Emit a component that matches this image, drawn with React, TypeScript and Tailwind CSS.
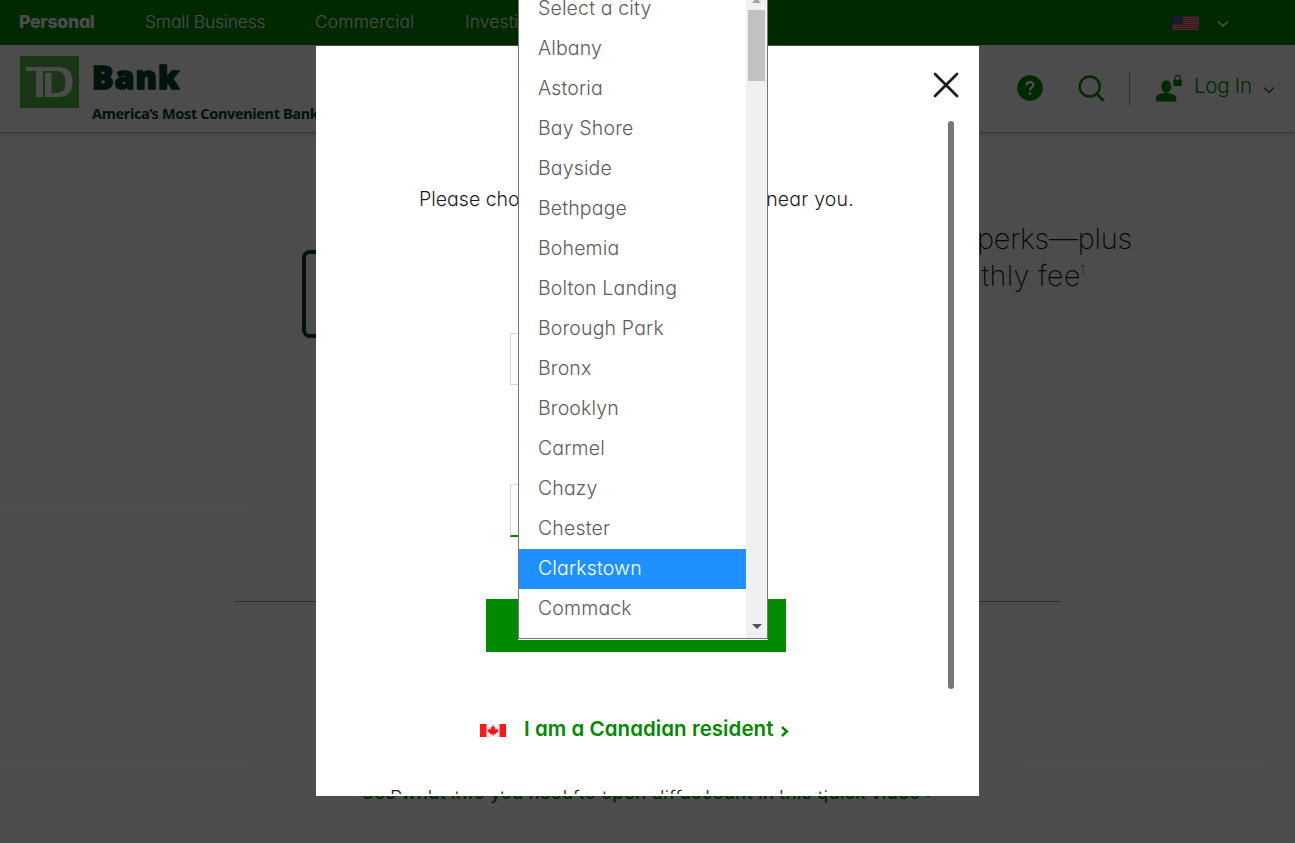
import React from "react";

const cities = [
  "Select a city", "Albany", "Astoria", "Bay Shore", "Bayside", "Bethpage", "Bohemia",
  "Bolton Landing", "Borough Park", "Bronx", "Brooklyn", "Carmel", "Chazy", "Chester",
  "Clarkstown", "Commack",
];

function TopBar() {
  return (
    <div className="flex h-[45px] items-center bg-[#008a00] text-[17.5px] font-light tracking-[-0.2px] text-white">
      <span className="ml-[19px] w-[126px] font-extrabold">Personal</span>
      <span className="w-[170px]">Small Business</span>
      <span className="w-[150px] tracking-[0.1px]">Commercial</span>
      <span className="flex-1 tracking-[0.1px]">Investing</span>
      <svg className="mr-[18px] h-[14px] w-[27px]" viewBox="0 0 27 14">
        <rect width="27" height="14" fill="#e5929a" />
        {[0, 2, 4, 6, 8, 10, 12].map((y) => (
          <rect key={y} y={y} width="27" height="1" fill="#c9505e" />
        ))}
        <rect width="11" height="8" fill="#50508a" />
        <path d="M1 2h9M1 4h9M1 6h9" stroke="#8b8bb6" strokeWidth=".5" strokeDasharray="1 1" />
      </svg>
      <svg className="mt-[3px] mr-[66px] h-[8px] w-[12px]" viewBox="0 0 12 8" fill="none" stroke="white" strokeWidth="1.8">
        <path d="M1 1.3l5 4.8 5-4.8" />
      </svg>
    </div>
  );
}

function Header() {
  return (
    <header className="flex h-[88px] items-start border-b border-[#bbb] bg-white shadow-[0_1px_4px_rgba(0,0,0,0.2)]">
      <svg className="mt-[11px] ml-[20px] h-[52px] w-[59px]" viewBox="0 0 59 52">
        <rect width="59" height="52" fill="#54b948" />
        <path
          fill="white"
          fillRule="evenodd"
          d="M6 11H38C48 11 52.500 16 52.500 26C52.500 37 47 41 38 41H25V17H31.500V37H37C43 37 45.500 33 45.500 26C45.500 19 43 15 37 15H23V41H16V15H6Z"
        />
      </svg>
      <div className="ml-[13px] flex w-[400px] flex-col whitespace-nowrap text-[#00402b]">
        <span className="mt-[13px] h-[38px] font-['Open_Sans'] text-[32px] leading-[38px] font-extrabold tracking-[1px] [-webkit-text-stroke:1.6px_#00402b]">Bank</span>
        <span className="mt-[7px] font-['Noto_Sans'] text-[14.5px] leading-[20px] font-bold tracking-[-0.35px]">America’s Most Convenient Bank®</span>
      </div>
      <div className="mt-[27px] mr-[20px] ml-auto flex h-[33px] items-center text-[#008a00]">
        <svg className="mr-[35px] mb-[2px] h-[26px] w-[26px]" viewBox="0 0 26 26">
          <circle cx="13" cy="13" r="12.800" fill="#008a00" />
          <path d="M9.700 10.200C9.700 6 16.400 6 16.400 10C16.400 12.500 13 12.300 13 15.200" fill="none" stroke="white" strokeWidth="2.400" />
          <circle cx="13" cy="18.500" r="1.500" fill="white" />
        </svg>
        <svg className="mr-[24px] mb-px h-[27px] w-[27px]" viewBox="0 0 27 27" fill="none" stroke="#008a00" strokeWidth="2.300">
          <circle cx="11.700" cy="11.500" r="10" />
          <path d="M18.700 18.700l7 7" strokeWidth="2.800" />
        </svg>
        <div className="h-[33px] w-px bg-[#aaa]" />
        <svg className="ml-[26px] h-[27px] w-[26px]" viewBox="0 0 26 27" fill="#008a00">
          <ellipse cx="10.300" cy="11.500" rx="5" ry="6.200" />
          <path d="M0 26v-2.500C0 19.500 5 18 10 18s10.300 1.500 10.300 5.500V26Q20.300 26.500 19 26.500H1.300Q0 26.500 0 26Z" />
          <rect x="17.500" y="4.700" width="8.200" height="6.300" rx=".6" />
          <path d="M19 5V3a2.600 2.600 0 0 1 5.200 0v2" fill="none" stroke="#008a00" strokeWidth="1.200" />
        </svg>
        <span className="ml-[12px] w-[61px] pb-[5px] text-[20.5px] leading-6 font-light tracking-[-0.25px] whitespace-nowrap">Log In</span>
        <svg className="mt-[3px] ml-[8px] h-[8px] w-[12px]" viewBox="0 0 12 8" fill="none" stroke="#008a00" strokeWidth="1.500">
          <path d="M1 1.500l5 5 5-5" />
        </svg>
      </div>
    </header>
  );
}

function PageBody() {
  return (
    <main className="flex h-[710px] flex-col">
      <div className="flex pt-[85px]">
        <div className="mt-[32px] ml-[302px] h-[88px] w-[150px] rounded-[8px] border-[4px] border-[#00402b]" />
        <div className="mt-[2px] mr-[163px] ml-auto text-right text-[29px] leading-[37px] font-extralight tracking-[-0.25px] text-[#1c1c1c]">
          <p>Great perks—plus</p>
          <p className="mr-[47px] tracking-[0.2px]">no mon&thinsp;thly fee<sup className="-top-[12px] text-[11px]">1</sup></p>
        </div>
      </div>
      <div className="mx-[235px] mt-[263px] h-px bg-[#999]" />
      <p className="mt-[177px] ml-[362px] text-[18.5px] leading-[26px] font-medium tracking-[0.15px] whitespace-nowrap text-[#008a00]">See what info you need to open an account in this quick video ›</p>
    </main>
  );
}

function CityList() {
  return (
    <div className="absolute -top-px left-[518px] flex h-[640px] w-[250px] overflow-hidden border border-[#767676] bg-white shadow-[0_1px_0_white]">
      <ul className="-mt-[11px] w-[227px] shrink-0">
        {cities.map((city) => (
          <li
            key={city}
            className={
              city === "Clarkstown"
                ? "h-10 bg-[#1e90ff] pl-[19px] text-[19.5px] leading-[38px] font-light tracking-[0.15px] text-white"
                : "h-10 pl-[19px] text-[19.5px] leading-[38px] font-light tracking-[0.15px] text-[#5c5c5c]"
            }
          >
            {city}
          </li>
        ))}
      </ul>
      <div className="flex flex-1 flex-col items-center bg-[#f0f0f0]">
        <svg className="h-[10px] w-[11px]" viewBox="0 0 11 10"><path d="M1 3L5.500-2 10 3Z" fill="#a3a3a3" /></svg>
        <div className="mr-px h-[71px] w-[17px] bg-[#c1c1c1]" />
        <svg className="mt-auto mb-[9px] h-[5px] w-[10px]" viewBox="0 0 10 5"><path d="M0 0H10L5 5Z" fill="#505050" /></svg>
      </div>
    </div>
  );
}

function LocationDialog() {
  return (
    <section className="absolute top-[46px] left-[316px] flex h-[750px] w-[663px] bg-white">
      <div className="flex h-[748px] w-[617px] flex-col overflow-hidden">
        <p className="mt-[140px] ml-[103px] flex w-[435px] shrink-0 justify-between text-[19.5px] leading-[26px] font-light whitespace-nowrap text-[#1c1c1c]">
          <span>Please choose</span><span className="tracking-[0.2px]">near you.</span>
        </p>
        <div className="mt-[121px] ml-[194px] h-[52px] w-[250px] shrink-0 border border-[#d6d6d6]" />
        <div className="mt-[99px] ml-[194px] h-[53px] w-[250px] shrink-0 border border-b-2 border-[#d6d6d6] border-b-[#008a00]" />
        <div className="mt-[62px] ml-[170px] h-[53px] w-[300px] shrink-0 bg-[#008a00]" />
        <div className="mt-[64px] ml-[164px] flex h-[26px] shrink-0 items-center">
          <svg className="mt-[3px] h-[13px] w-[26px]" viewBox="0 0 26 13">
            <rect width="26" height="13" fill="#fff5f5" />
            <rect width="6.500" height="13" fill="#ff1616" />
            <rect x="19.500" width="6.500" height="13" fill="#ff1616" />
            <path d="M13 1l1.200 2.300 1-.4-.3 2.700 1.500-1.200.4 1 1.700-.2-.6 1.500.6.600-2.800 2.300.2 1-2.500-.3V12h-.8v-1.700l-2.500.3.200-1-2.800-2.300.6-.6-.6-1.500 1.700.2.400-1 1.500 1.200-.3-2.700 1 .4Z" fill="#ff1616" />
          </svg>
          <span className="ml-[18px] w-[249px] text-[20.5px] font-semibold tracking-[0.05px] whitespace-nowrap text-[#008a00]">I am a Canadian resident</span>
          <svg className="mt-[4px] ml-[8px] h-[11px] w-[8px]" viewBox="0 0 8 11" fill="none" stroke="#008a00" strokeWidth="2.500"><path d="M1 1l4.800 4.500L1 10" /></svg>
        </div>
        <p className="mt-[43px] ml-[74px] shrink-0 text-[19.5px] leading-[26px] font-light whitespace-nowrap text-[#1c1c1c]">Products, rates and features differ by your location</p>
      </div>
      <div className="flex w-[26px] flex-col items-start">
        <button aria-label="Close" className="mt-[26px] h-[26px] w-[26px]">
          <svg viewBox="0 0 26 26" fill="none" stroke="#1c1c1c" strokeWidth="2.800" strokeLinecap="round"><path d="M2 2l22 22M24 2L2 24" /></svg>
        </button>
        <div className="mt-[23px] ml-[15px] h-[568px] w-[6px] rounded-full bg-[#767676]" />
      </div>
    </section>
  );
}

export default function App() {
  return (
    <div className="relative h-[843px] w-[1295px] overflow-hidden bg-white font-['Inter',sans-serif] [font-feature-settings:'cv11']">
      <TopBar />
      <Header />
      <PageBody />
      <div className="absolute inset-0 bg-black/70" />
      <LocationDialog />
      <CityList />
    </div>
  );
}
